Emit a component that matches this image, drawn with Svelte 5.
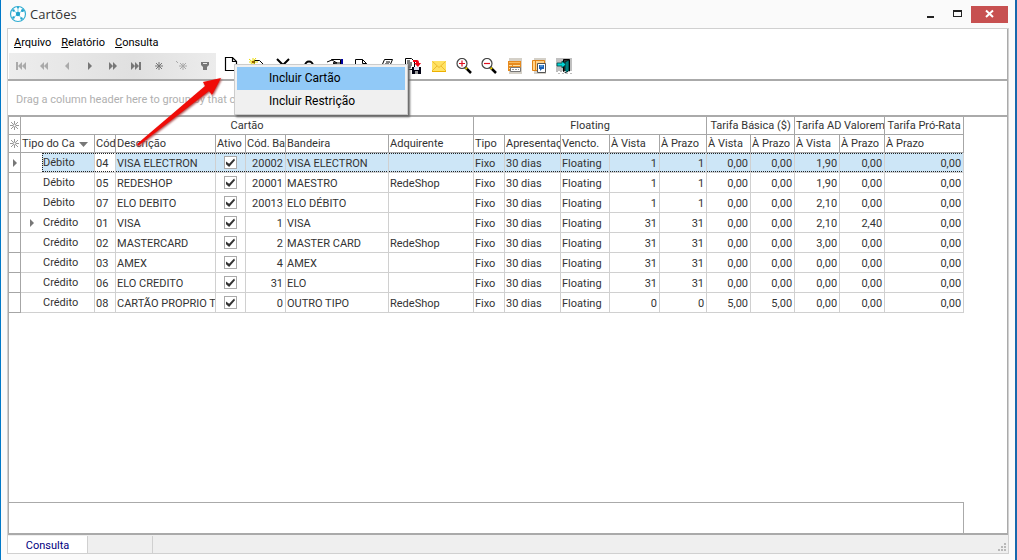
<script lang="ts">
  type Row = {
    type: string;
    code: string;
    description: string;
    active: boolean;
    brandCode: string;
    brand: string;
    acquirer: string;
    values: string[];
    expandable?: boolean;
  };

  function row(type: string, code: string, description: string, brandCode: string, brand: string, acquirer: string, values: string[], expandable = false): Row {
    return { type, code, description, active: true, brandCode, brand, acquirer, values, expandable };
  }

  let rows = $state([
    row('Débito', '04', 'VISA ELECTRON', '20002', 'VISA ELECTRON', '', ['1', '1', '0,00', '0,00', '1,90', '0,00', '0,00']),
    row('Débito', '05', 'REDESHOP', '20001', 'MAESTRO', 'RedeShop', ['1', '1', '0,00', '0,00', '1,90', '0,00', '0,00']),
    row('Débito', '07', 'ELO DEBITO', '20013', 'ELO DÉBITO', '', ['1', '1', '0,00', '0,00', '2,10', '0,00', '0,00']),
    row('Crédito', '01', 'VISA', '1', 'VISA', '', ['31', '31', '0,00', '0,00', '2,10', '2,40', '0,00'], true),
    row('Crédito', '02', 'MASTERCARD', '2', 'MASTER CARD', 'RedeShop', ['31', '31', '0,00', '0,00', '3,00', '0,00', '0,00']),
    row('Crédito', '03', 'AMEX', '4', 'AMEX', '', ['31', '31', '0,00', '0,00', '0,00', '0,00', '0,00']),
    row('Crédito', '06', 'ELO CREDITO', '31', 'ELO', '', ['31', '31', '0,00', '0,00', '0,00', '0,00', '0,00']),
    row('Crédito', '08', 'CARTÃO PROPRIO T', '0', 'OUTRO TIPO', 'RedeShop', ['0', '0', '5,00', '5,00', '0,00', '0,00', '0,00'])
  ]);

  let selected = $state(0);

  const widths = [12, 74, 21, 100, 30, 40, 103, 85, 31, 56, 49, 50, 47, 44, 44, 45, 45, 79];

  const groups = [
    { label: 'Cartão', span: 7 },
    { label: 'Floating', span: 5 },
    { label: 'Tarifa Básica ($)', span: 2 },
    { label: 'Tarifa AD Valorem', span: 2 },
    { label: 'Tarifa Pró-Rata', span: 1 }
  ];

  const columns = [
    'Cód', 'Descrição', 'Ativo', 'Cód. Ba', 'Bandeira', 'Adquirente', 'Tipo', 'Apresentaç',
    'Vencto.', 'À Vista', 'À Prazo', 'À Vista', 'À Prazo', 'À Vista', 'À Prazo', 'À Prazo'
  ];

  const nav = [
    { name: 'Primeiro', dim: true, d: 'M3 4h2v8H3zM9 4v8L5 8zM13 4v8L9 8z' },
    { name: 'Página anterior', dim: true, d: 'M8 4v8L4 8zM12 4v8L8 8z' },
    { name: 'Anterior', dim: true, d: 'M10 4v8L6 8z' },
    { name: 'Próximo', dim: false, d: 'M6 4v8l4-4z' },
    { name: 'Próxima página', dim: false, d: 'M4 4v8l4-4zM8 4v8l4-4z' },
    { name: 'Último', dim: false, d: 'M3 4v8l4-4zM7 4v8l4-4zM11 4h2v8h-2z' },
    { name: 'Marcar', dim: false, d: 'M8 4v8M4 8h8M5 5l6 6M11 5l-6 6', line: true },
    { name: 'Ir para marca', dim: true, d: 'M9 5v7M5 8h8M6 5l6 6M12 5l-6 6M2 3l2 2', line: true },
    { name: 'Filtrar', dim: false, d: 'M4 4h8v3l-2 2v3H6V9L4 7zM6 5v1h4V5z' }
  ];
</script>

{#snippet star()}
  <svg class="star" viewBox="0 0 9 9" width="9" height="9"><path d="M4.500 0v9M0 4.500h9M1 1l7 7M8 1L1 8" /><circle cx="4.500" cy="4.500" r="1.500" /></svg>
{/snippet}

<div class="window">
  <header class="titlebar">
    <svg viewBox="0 0 18 18" width="18" height="18">
      <circle cx="9" cy="9" r="7.500" fill="#fff" stroke="#31add2" stroke-width="1.200" />
      <path d="M9 9L4 5M9 9l5-4M9 9l-5 4M9 9l4 5M9 9V2" stroke="#7fcfe6" fill="none" />
      <g fill="#22a4cd"><circle cx="9" cy="9" r="2.200" /><circle cx="4.500" cy="5.500" r="1.200" /><circle cx="13.500" cy="5.500" r="1.500" /><circle cx="4.500" cy="12.500" r="1.200" /><circle cx="12.500" cy="13.500" r="1.200" /><circle cx="9" cy="2.500" r="1" /></g>
    </svg>
    <h1>Cartões</h1>
    <div class="controls">
      <button aria-label="Minimizar"><svg width="10" height="10"><path d="M1 7h7v2H1z" fill="#222" /></svg></button>
      <button aria-label="Maximizar"><svg width="10" height="10"><path d="M0 1h9v7H0zM1 3v4h7V3z" fill="#222" fill-rule="evenodd" /></svg></button>
      <button class="close" aria-label="Fechar"><svg width="10" height="10"><path d="M1 1.500l7 6.500M8 1.500L1 8" stroke="#fff" stroke-width="2" /></svg></button>
    </div>
  </header>

  <main class="client">
    <nav class="menubar">
      <button><u>A</u>rquivo</button>
      <button><u>R</u>elatório</button>
      <button><u>C</u>onsulta</button>
    </nav>

    <div class="toolbar">
      <div class="navigator">
        {#each nav as item}
          <button aria-label={item.name} class:dim={item.dim} class:line={item.line}>
            <svg viewBox="0 0 16 16" width="16" height="16" fill-rule="evenodd"><path d={item.d} /></svg>
          </button>
        {/each}
      </div>

      <div class="tools">
        <div class="new">
          <button aria-label="Incluir">
            <svg viewBox="0 0 16 16" width="16" height="16"><path d="M2.500 1.500h7l4 4v9h-11zM9.500 1.500v4h4" fill="#fff" stroke="#000" stroke-width="1.200" /></svg>
          </button>
          <div class="popup" role="menu">
            <button role="menuitem" class="active">Incluir Cartão</button>
            <button role="menuitem">Incluir Restrição</button>
          </div>
        </div>
        <button aria-label="Novo">
          <svg viewBox="0 0 16 16" width="16" height="16"><path d="M5.500 2.500h5l4 4v8h-9z" fill="#fff" stroke="#000" /><path d="M0 1l7 6M7 0L1 7M0 4h9M4 0v8" stroke="#e8d800" /><path d="M3 3h2v2H3z" fill="#a06000" /></svg>
        </button>
        <button aria-label="Excluir">
          <svg viewBox="0 0 16 16" width="16" height="16"><path d="M2 1l12 12M14 1L2 13" stroke="#000" stroke-width="2" /></svg>
        </button>
        <button aria-label="Atualizar">
          <svg viewBox="0 0 16 16" width="16" height="16"><path d="M4 8c0-6 8-6 8 0M9 9h5V6" stroke="#000" stroke-width="2" fill="none" /></svg>
        </button>
        <button aria-label="Propriedades">
          <svg viewBox="0 0 16 16" width="16" height="16"><path d="M4.500 1.500h9v12h-9z" fill="#fff" stroke="#000" /><path d="M14 1h2v6h-2z" fill="#0000a0" /><path d="M0 4l5-2 5 3H6l4 2H3M6 5h8" fill="#fff" stroke="#000" /></svg>
        </button>
        <button aria-label="Visualizar">
          <svg viewBox="0 0 16 16" width="16" height="16"><path d="M2.500 1.500h7l4 4v9h-11zM9.500 1.500v4h4" fill="#fff" stroke="#000" /></svg>
        </button>
        <button aria-label="Imprimir">
          <svg viewBox="0 0 16 16" width="16" height="16"><path d="M5.500 1.500h8l-3 7h-8zM7 4h4M6 6h4M1.500 8.500h12v5h-12z" fill="#fff" stroke="#000" /></svg>
        </button>
        <button aria-label="Exportar">
          <svg viewBox="0 0 16 16" width="16" height="16"><path d="M.5.500h6l3 3v8h-9zM2 3h3M2 5h5M2 7h5M2 9h4" fill="#fff" stroke="#000" /><path d="M8 2h4q2 0 2 3h2l-3 4-4-4h2V4H8z" fill="#f00014" /><path d="M7 9h9v7H7z" fill="#001" /><path d="M9 9h5v3H9z" fill="#dde" /><path d="M10 13h3v3h-3z" fill="#999" /></svg>
        </button>
      </div>

      <div class="tools extra">
        <button aria-label="E-mail">
          <svg viewBox="0 0 16 16" width="16" height="16"><path d="M1 3h14v11H1z" fill="#ffe262" /><path d="M1 13.500h14" stroke="#eeb000" /><path d="M1.500 3.500l6.500 6 6.500-6M1 13l5-5M15 13l-5-5" stroke="#e8b020" stroke-width=".8" fill="none" /></svg>
        </button>
        <button aria-label="Ampliar">
          <svg viewBox="0 0 16 16" width="16" height="16"><path d="M9 9l6 6" stroke="#000" stroke-width="2.500" /><path d="M9 9l2 2" stroke="#e8d000" stroke-width="2" /><circle cx="6" cy="5.500" r="5" fill="#fff" stroke="#444" stroke-width="1.200" /><path d="M3 5.500h6M6 2.500v6" stroke="#e01020" stroke-width="1.200" /></svg>
        </button>
        <button aria-label="Reduzir">
          <svg viewBox="0 0 16 16" width="16" height="16"><path d="M9 9l6 6" stroke="#000" stroke-width="2.500" /><path d="M9 9l2 2" stroke="#e8d000" stroke-width="2" /><circle cx="6" cy="5.500" r="5" fill="#fff" stroke="#444" stroke-width="1.200" /><path d="M3 5.500h6" stroke="#e01020" stroke-width="1.200" /></svg>
        </button>
        <button aria-label="Layout">
          <svg viewBox="0 0 16 16" width="16" height="16"><path d="M3 0h13v16H3z" fill="#d4d0c8" /><path d="M2 3h13v10H2z" fill="#e68a1e" /><path d="M3 4.500h11" stroke="#f8b95c" /><path d="M3 7.500h3M7 7.500h7M3 10.500h1" stroke="#ffdf9c" /><path d="M4.500 9.500h10v4h-10z" fill="#fff" stroke="#777" /><path d="M6 11.500h7" stroke="#999" stroke-dasharray="2 1" /></svg>
        </button>
        <button aria-label="Salvar layout">
          <svg viewBox="0 0 16 16" width="16" height="16"><path d="M3 0h12v16H3z" fill="#d4d0c8" /><path d="M1.500 2.500h12v10h-12zM4.500 3v9" fill="#ffd38a" stroke="#e08214" /><path d="M6.500 5.500h8v9h-8z" fill="#fff" stroke="#555" /><path d="M8 7h5v4h-2l-2 2V11H8z" fill="#1b62b8" /><path d="M9 8h3" stroke="#8bc4f0" /></svg>
        </button>
        <button aria-label="Sair">
          <svg viewBox="0 0 16 16" width="16" height="16"><path d="M0 0h16v13H0z" fill="#c0c0c0" /><path d="M7.500 1.500h6v12h-6z" fill="#333" stroke="#000" /><path d="M9 4l4-2v11l-4 2z" fill="#008080" stroke="#000" stroke-width=".6" /><path d="M1 5h5V3l4 3.500L6 10V8H1z" fill="#00d5d5" stroke="#044" stroke-width=".8" /><path d="M0 13.500h16" stroke="#bbb" stroke-dasharray="2 2" /><path d="M2 15.500h14" stroke="#bbb" stroke-dasharray="2 2" /></svg>
        </button>
      </div>

      <svg class="pointer" viewBox="0 0 90 72" width="90" height="72">
        <path d="M3 67L71 9l-2-4 18-4-9 17-3-4L4 69z" fill="#f00c08" />
      </svg>
    </div>

    <div class="grouping">Drag a column header here to group by that column</div>

    <div class="grid">
      <table>
        <colgroup>
          {#each widths as width}<col style="width: {width}px" />{/each}
        </colgroup>
        <thead>
          <tr class="bands">
            <th class="mark">{@render star()}</th>
            {#each groups as group}
              <th colspan={group.span}>{group.label}</th>
            {/each}
          </tr>
          <tr>
            <th class="mark">{@render star()}</th>
            <th><div class="sorted">Tipo do Ca<svg width="9" height="5"><path d="M0 0h9L4.500 5z" fill="#777" /></svg></div></th>
            {#each columns as column}<th>{column}</th>{/each}
          </tr>
        </thead>
        <tbody>
          {#each rows as item, i}
            <tr class:selected={i === selected} onclick={() => (selected = i)}>
              <td class="mark">
                {#if i === selected}<svg width="4" height="8"><path d="M0 0l4 4-4 4z" fill="#777" /></svg>{/if}
              </td>
              <td class="type">
                <div>
                  <i>{#if item.expandable}<svg width="4" height="8"><path d="M0 0l4 4-4 4z" fill="#777" /></svg>{/if}</i>
                  <span>{item.type}</span>
                </div>
              </td>
              <td class="code">{item.code}</td>
              <td>{item.description}</td>
              <td class="check"><input type="checkbox" aria-label="Ativo {item.code}" bind:checked={item.active} /></td>
              <td class="num">{item.brandCode}</td>
              <td>{item.brand}</td>
              <td>{item.acquirer}</td>
              <td>Fixo</td>
              <td>30 dias</td>
              <td>Floating</td>
              {#each item.values as value}<td class="num">{value}</td>{/each}
            </tr>
          {/each}
        </tbody>
      </table>
      <div class="summary"></div>
    </div>

    <footer class="statusbar">
      <button>Consulta</button>
      <span></span>
      <svg width="9" height="9"><path d="M6 0h2v2H6zM3 3h2v2H3zM6 3h2v2H6zM0 6h2v2H0zM3 6h2v2H3zM6 6h2v2H6z" fill="#b8b8b8" /></svg>
    </footer>
  </main>
</div>

<style>
  :global(body) {
    margin: 0;
    background: #fafafa;
  }

  .window {
    display: flex;
    flex-direction: column;
    box-sizing: border-box;
    min-height: 100vh;
    padding: 0 6px 6px;
    border-left: 1px solid #0078c8;
    border-right: 2px solid #1668ad;
    background: #fafafa;
    color: #333;
    font: 11px/16px Tahoma, Roboto, "Noto Sans", sans-serif;
  }

  button {
    padding: 0;
    border: 0;
    background: none;
    color: inherit;
    font: inherit;
  }

  svg {
    display: block;
    flex: none;
  }

  .titlebar {
    display: flex;
    align-items: center;
    height: 28px;
    padding-left: 2px;
    gap: 3px;
  }

  h1 {
    flex: 1;
    margin: 0;
    font: 13px/20px "Segoe UI", "Open Sans", sans-serif;
  }

  .controls {
    display: flex;
    height: 17px;
  }

  .controls button {
    display: grid;
    place-items: center;
    width: 27px;
  }

  .controls .close {
    width: 37px;
    margin-right: 1px;
    background: #c75050;
  }

  .client {
    display: flex;
    flex: 1;
    flex-direction: column;
    border: 1px solid #d0d0d0;
    background: #fff;
  }

  .menubar {
    display: flex;
    gap: 10px;
    padding: 6px 6px 2px;
    border-right: 1px solid #aaa;
    color: #000;
  }

  .toolbar {
    position: relative;
    display: flex;
    height: 26px;
    border-right: 1px solid #aaa;
    border-bottom: 2px solid #aaa;
    padding-left: 1px;
  }

  .navigator {
    display: flex;
    background: linear-gradient(90deg, #ededed, #e0e0e0 60%, #ececec);
  }

  .navigator button {
    display: grid;
    place-items: center;
    width: 23px;
    fill: #777;
  }

  .navigator .dim {
    fill: #aaa;
  }

  .navigator .line {
    fill: none;
    stroke: #777;
  }

  .navigator .line.dim {
    stroke: #aaa;
  }

  .tools {
    display: flex;
    align-items: center;
    gap: 10px;
    padding-left: 7px;
  }

  .extra {
    gap: 9px;
    padding-left: 10px;
  }

  .new {
    position: relative;
  }

  .popup {
    position: absolute;
    z-index: 2;
    top: 8px;
    left: 11px;
    display: flex;
    flex-direction: column;
    width: 168px;
    padding: 2px;
    border: 1px solid #ccc;
    background: #f0f0f0;
    box-shadow: 2px 2px 2px #666;
    color: #000;
    font: 12px/22px "Segoe UI", Roboto, "Open Sans", sans-serif;
  }

  .popup button {
    height: 22px;
    padding: 0 0 0 32px;
    text-align: left;
  }

  .popup .active {
    height: 23px;
    background: #91c9f7;
  }

  .pointer {
    position: absolute;
    z-index: 1;
    top: 24px;
    left: 126px;
    filter: drop-shadow(1px 1px 1px #a44);
  }

  .grouping {
    padding: 11px 8px 7px;
    border-right: 1px solid #aaa;
    border-bottom: 2px solid #aaa;
    color: #b0b0b0;
  }

  .grid {
    display: flex;
    flex: 1;
    flex-direction: column;
    justify-content: space-between;
    align-items: flex-start;
    border: solid #aaa;
    border-width: 0 1px 2px;
  }

  table {
    width: 955px;
    table-layout: fixed;
    border-spacing: 0;
  }

  th,
  td {
    box-sizing: border-box;
    height: 20px;
    padding: 2px 1px 0;
    overflow: hidden;
    border: solid #d0d0d0;
    border-width: 0 1px 1px 0;
    font-weight: normal;
    text-align: left;
    white-space: nowrap;
  }

  th {
    height: 18px;
    padding-top: 1px;
    border-color: #a6a6a6;
  }

  .bands th {
    text-align: center;
  }

  .mark {
    padding: 0 1px;
    border-color: #a6a6a6;
  }

  td.mark {
    padding-left: 4px;
  }

  .star {
    stroke: #999;
    fill: #fff;
  }

  .sorted {
    display: flex;
    align-items: center;
    justify-content: space-between;
    padding-right: 5px;
  }

  .num {
    padding-right: 2px;
    text-align: right;
  }

  .type {
    padding: 0;
  }

  .type div {
    display: flex;
    line-height: 18px;
  }

  .type i {
    display: grid;
    place-items: center;
    width: 21px;
  }

  .type span {
    flex: 1;
    padding: 1px 0 0 1px;
  }

  .check {
    padding-top: 0;
  }

  .check input {
    display: block;
    box-sizing: border-box;
    width: 13px;
    height: 13px;
    margin: 0 auto;
    appearance: none;
    border: 1px solid #aaa;
    background: #fff;
  }

  .check input:checked::after {
    content: "";
    display: block;
    width: 9px;
    height: 9px;
    margin: 1px;
    background: #333;
    clip-path: polygon(0 40%, 35% 65%, 90% 5%, 100% 25%, 35% 100%, 0 70%);
  }

  .selected td:not(.mark, .type),
  .selected .type span {
    background:
      repeating-linear-gradient(90deg, #222 0 1px, transparent 1px 2px) top / 100% 1px no-repeat,
      repeating-linear-gradient(90deg, #222 0 1px, transparent 1px 2px) bottom / 100% 1px no-repeat,
      #cde6f7;
  }

  .selected td.code {
    background-color: #fff;
  }

  .selected .type span {
    border-left: 1px dotted #222;
    padding-left: 0;
  }

  .summary {
    box-sizing: border-box;
    width: 955px;
    height: 31px;
    border: solid #aaa;
    border-width: 1px 1px 0 0;
  }

  .statusbar {
    display: flex;
    align-items: flex-end;
    height: 18px;
    background: #efefef;
  }

  .statusbar button {
    width: 80px;
    height: 17px;
    padding-top: 2px;
    border-right: 1px solid #d0d0d0;
    background: #fff;
    color: #000080;
  }

  .statusbar span {
    width: 64px;
    height: 17px;
    border-right: 1px solid #d0d0d0;
  }

  .statusbar svg {
    margin: 0 1px 1px auto;
  }
</style>
